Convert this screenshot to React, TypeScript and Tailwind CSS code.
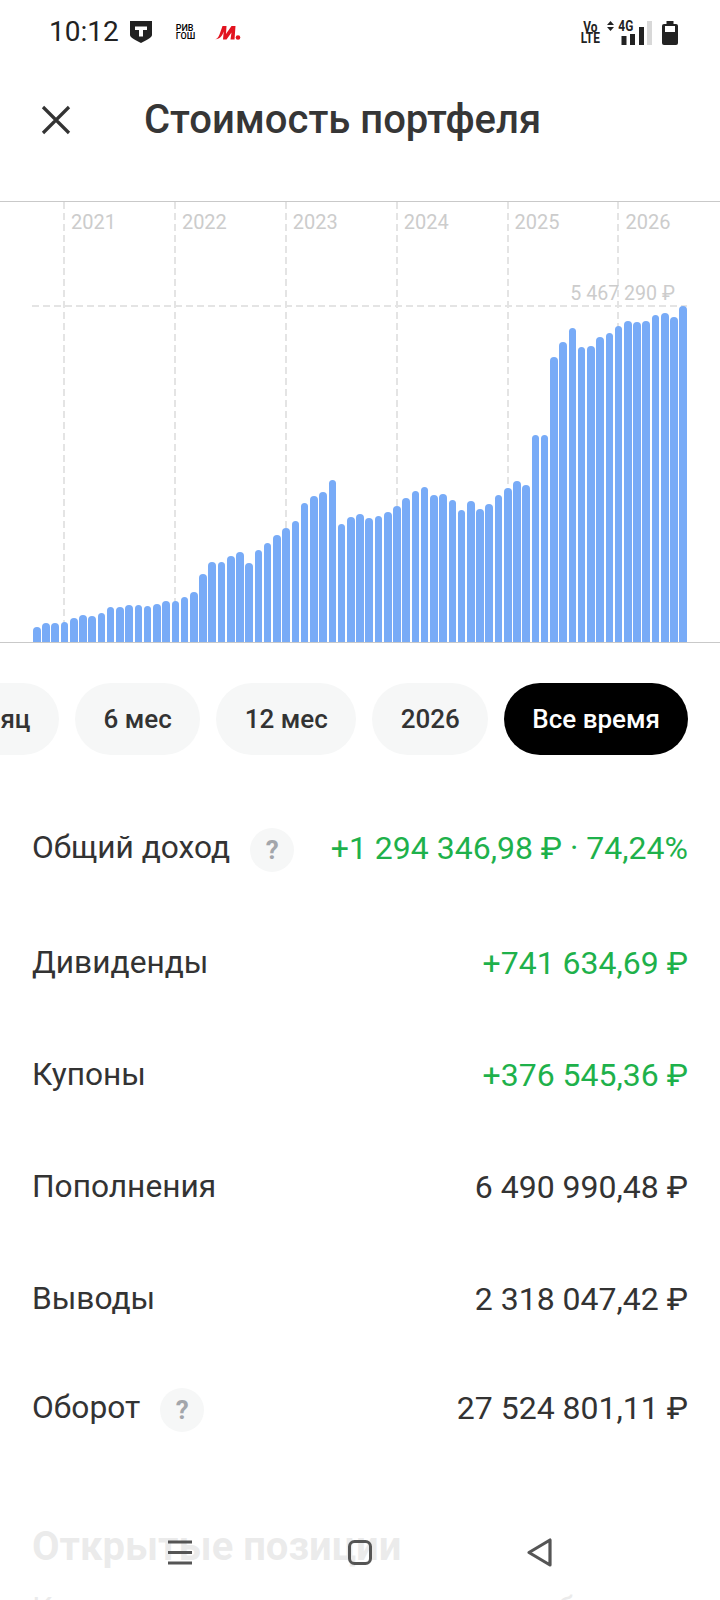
const tops = [1282,1270,1269,1266,1254,1247,1248,1240,1222,1221,1217,1217,1218,1212,1203,1203,1191,1178,1122,1087,1088,1068,1057,1089,1050,1030,1007,986,964,910,890,878,842,973,952,944,956,948,936,918,896,874,862,886,884,901,932,903,928,912,885,865,845,855,705,705,473,426,385,441,439,412,399,378,364,366,365,347,341,351,318];
const years = ["2021","2022","2023","2024","2025","2026"];

function Row({ label, value, green, hint, className = "" }: { label: string; value: string; green?: boolean; hint?: boolean; className?: string }) {
  return (
    <div className={"flex items-center justify-between h-[112px] " + className}>
      <div className="flex items-center">
        <span className="text-[31.7px] leading-[40px] text-[#333333]">{label}</span>
        {hint && (
          <span className="ml-5 mt-1 w-11 h-11 rounded-full bg-[#f6f7f7] flex items-center justify-center text-[26px] font-bold text-[#a3a6ab]">?</span>
        )}
      </div>
      <span className={"text-[32px] leading-[40px] " + (green ? "text-[#1eb14b]" : "text-[#333333]")}>{value}</span>
    </div>
  );
}

function Chip({ children, active }: { children: React.ReactNode; active?: boolean }) {
  return (
    <div className={"shrink-0 h-[72px] rounded-full flex items-center text-[26px] font-medium " + (active ? "px-7 bg-black text-white" : "px-[28.5px] bg-[#f6f7f7] text-[#333333]")}>
      {children}
    </div>
  );
}

export default function App() {
  return (
    <div className="relative w-[720px] h-[1600px] overflow-hidden bg-white" style={{ fontFamily: "Roboto, sans-serif" }}>
      <div className="flex items-center justify-between h-[64px] pl-[49px] pr-[42px]">
        <div className="flex items-center">
          <span className="text-[28px] text-[#222222]">10:12</span>
          <svg width="22" height="22" viewBox="0 0 22 22" className="ml-[11px]">
            <path d="M0 0h22v14c0 3-6 5-11 8C6 19 0 17 0 14z" fill="#222" />
            <path d="M5 5.5h12v3.5h-4v6.5H9V9H5z" fill="#fff" />
          </svg>
          <span className="ml-6 text-[9px] leading-[8px] font-medium text-black">РИВ<br />ГОШ</span>
          <svg width="28" height="15" viewBox="0 0 27 15" className="ml-[18px]">
            <path d="M0 14.5c3 0 5-2 6-5L9 1h4l-.5 8c2-3 4-6 5.500-8H22l-1 13.500h-4l1-7-5 7H9.500l.7-8c-1.500 4-3 8-10.200 8z" fill="#e2131f" />
            <circle cx="24.500" cy="12.500" r="2.300" fill="#e2131f" />
          </svg>
        </div>
        <div className="flex items-center">
          <span className="block text-[14px] leading-[11px] font-bold text-[#222222] text-center scale-x-[0.85] -mx-[1px] mt-[2px]">Vo<br />LTE</span>
          <div className="relative w-[46px] h-[24px] ml-[6px] mt-[1px]">
            <svg width="46" height="24" viewBox="0 0 46 24">
              <path d="M0 4l3.500-4L7 4zM0 6h7L3.500 10z" fill="#222" />
              <rect x="14.500" y="15" width="5" height="9" fill="#222" />
              <rect x="23" y="13" width="5" height="11" fill="#222" />
              <rect x="32" y="6" width="5" height="18" fill="#222" />
              <rect x="40" y="0" width="5" height="24" fill="#d8d8d8" />
            </svg>
            <span className="absolute left-[10px] -top-[1px] text-[14px] leading-[13px] font-bold text-[#222222] scale-x-[0.85]">4G</span>
          </div>
          <svg width="16" height="24" viewBox="0 0 16 24" className="ml-[9px] mt-[1px]">
            <rect x="4.500" y="0" width="7" height="3" fill="#222" />
            <rect x="0" y="3" width="16" height="21" rx="2" fill="#222" />
            <rect x="3" y="5" width="10" height="6" fill="#fff" />
          </svg>
        </div>
      </div>

      <div className="flex items-center h-[112px] mb-[25px] pl-[41px]">
        <svg width="30" height="30" viewBox="0 0 30 30">
          <path d="M2 2l26 26M28 2L2 28" stroke="#333" strokeWidth="3.200" fill="none" />
        </svg>
        <span className="ml-[73px] text-[40px] font-medium text-[#363636]">Стоимость портфеля</span>
      </div>

      <div className="relative h-[442px] border-y border-[#c9c9c9]">
        <div className="absolute inset-0 flex pl-[63px]">
          {years.map((y) => (
            <div key={y} className="shrink-0 w-[110.9px] h-full flex">
              <div className="w-[2px] h-full bg-[repeating-linear-gradient(to_bottom,#e4e4e4_0,#e4e4e4_7px,transparent_7px,transparent_11px)]" />
              <div className="pl-[6px] text-[20px] leading-[24px] pt-[8px] text-[#cccccc]">{y}</div>
            </div>
          ))}
        </div>
        <div className="absolute left-[32px] w-[655px] top-[103px] h-[2px] bg-[repeating-linear-gradient(to_right,#e4e4e4_0,#e4e4e4_7px,transparent_7px,transparent_11px)]" />
        <div className="absolute right-[45px] top-[80px] text-[19.6px] leading-[24px] text-[#cccccc]">5 467 290 ₽</div>
        <div className="absolute left-[33px] w-[655px] bottom-0 flex justify-between items-end">
          {tops.map((t, i) => (
            <div key={i} className="w-[7.6px] rounded-t-[4px] bg-[#78abf7]" style={{ height: (1327 - t) / 3 }} />
          ))}
        </div>
      </div>

      <div className="flex justify-end gap-4 pr-[32px] mt-[40px]">
        <Chip>Месяц</Chip>
        <Chip>6 мес</Chip>
        <Chip>12 мес</Chip>
        <Chip>2026</Chip>
        <Chip active>Все время</Chip>
      </div>

      <div className="px-8 mt-[37px]">
        <Row label="Общий доход" value="+1 294 346,98 ₽ · 74,24%" green hint />
        <Row label="Дивиденды" value="+741 634,69 ₽" green className="mt-[3px]" />
        <Row label="Купоны" value="+376 545,36 ₽" green />
        <Row label="Пополнения" value="6 490 990,48 ₽" />
        <Row label="Выводы" value="2 318 047,42 ₽" />
        <Row label="Оборот" value="27 524 801,11 ₽" hint className="-mt-[3px]" />
      </div>

      <div className="px-8 mt-[59px]">
        <div className="text-[40px] leading-[48px] font-bold text-[#333333] whitespace-nowrap">Открытые позиции</div>
        <div className="mt-[15px] text-[32px] leading-[44px] text-[#333333] whitespace-nowrap">Как изменилась стоимость ваших бумаг</div>
      </div>

      <div className="absolute left-0 right-0 bottom-0 h-[110px] bg-white/90">
        <svg width="720" height="110" viewBox="0 0 720 110">
          <path d="M168 52h24M168 62.500h24M168 73h24" stroke="#555" strokeWidth="3" fill="none" />
          <rect x="349.500" y="51.500" width="21" height="22" rx="5" stroke="#555" strokeWidth="3" fill="none" />
          <path d="M550 50v25l-21-12.500z" stroke="#555" strokeWidth="3.200" strokeLinejoin="round" fill="none" />
        </svg>
      </div>
    </div>
  );
}
